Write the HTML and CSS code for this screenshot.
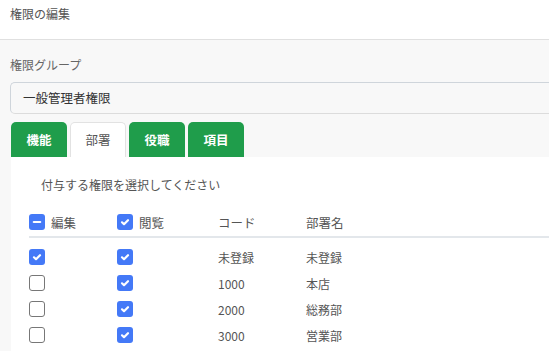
FILE: index.html
```html
<!DOCTYPE html>
<html>
<head>
    <title>権限の編集</title>
    <meta charset="utf-8">
    <link rel="stylesheet" href="styles.css">
</head>
<body>
    <div class="page">
        <div class="page-header">権限の編集</div>

        <div class="page-body">
            <label class="field-label">権限グループ</label>
            <div class="select-box">一般管理者権限</div>

            <div class="tabs">
                <div class="tab">機能</div>
                <div class="tab active">部署</div>
                <div class="tab">役職</div>
                <div class="tab">項目</div>
            </div>

            <div class="tab-panel">
                <p class="hint">付与する権限を選択してください</p>

                <div class="perm-table">
                    <div class="perm-row head">
                        <div class="cell"><span class="cb on"><svg viewBox="0 0 16 16"><path d="M4.8 8h6.4" /></svg></span>編集</div>
                        <div class="cell"><span class="cb on"><svg viewBox="0 0 16 16"><path d="M5 8.3l2 1.9 4-4" /></svg></span>閲覧</div>
                        <div class="cell">コード</div>
                        <div class="cell">部署名</div>
                    </div>
                    <div class="perm-body">
                        <div class="perm-row">
                            <div class="cell"><span class="cb on"><svg viewBox="0 0 16 16"><path d="M5 8.3l2 1.9 4-4" /></svg></span></div>
                            <div class="cell"><span class="cb on"><svg viewBox="0 0 16 16"><path d="M5 8.3l2 1.9 4-4" /></svg></span></div>
                            <div class="cell">未登録</div>
                            <div class="cell">未登録</div>
                        </div>
                        <div class="perm-row">
                            <div class="cell"><span class="cb"></span></div>
                            <div class="cell"><span class="cb on"><svg viewBox="0 0 16 16"><path d="M5 8.3l2 1.9 4-4" /></svg></span></div>
                            <div class="cell">1000</div>
                            <div class="cell">本店</div>
                        </div>
                        <div class="perm-row">
                            <div class="cell"><span class="cb"></span></div>
                            <div class="cell"><span class="cb on"><svg viewBox="0 0 16 16"><path d="M5 8.3l2 1.9 4-4" /></svg></span></div>
                            <div class="cell">2000</div>
                            <div class="cell">総務部</div>
                        </div>
                        <div class="perm-row">
                            <div class="cell"><span class="cb"></span></div>
                            <div class="cell"><span class="cb on"><svg viewBox="0 0 16 16"><path d="M5 8.3l2 1.9 4-4" /></svg></span></div>
                            <div class="cell">3000</div>
                            <div class="cell">営業部</div>
                        </div>
                    </div>
                </div>
            </div>
        </div>
    </div>
</body>
</html>
```

FILE: styles.css
```css
html, body {
    margin: 0;
    padding: 0;
    overflow: hidden;
}
body {
    font-family: "Noto Sans CJK JP", "Noto Sans", sans-serif;
    font-size: 12px;
    color: #555;
    background-color: #f8f8f8;
}
.page-header {
    height: 39px;
    line-height: 28px;
    padding-left: 10px;
    background-color: white;
    border-bottom: 1px solid #e0e0e0;
    color: #555;
}
.page-body {
    padding: 16px 0 0 10px;
}
.field-label {
    display: block;
    line-height: 18px;
    margin-bottom: 8px;
    color: #666;
}
.select-box {
    height: 30px;
    line-height: 30px;
    padding-left: 12px;
    border: 1px solid #cfd5db;
    border-right: none;
    border-bottom-color: #dcdcdc;
    border-radius: 5px 0 0 5px;
    font-size: 12.5px;
    color: #333;
}
.tabs {
    display: flex;
    gap: 3px;
    margin: 8px 0 0 1px;
}
.tab {
    width: 56px;
    height: 35px;
    box-sizing: border-box;
    line-height: 35px;
    text-align: center;
    background-color: #1f9d4b;
    color: white;
    font-weight: bold;
    font-size: 12.5px;
    border-radius: 5px 5px 0 0;
}
.tab.active {
    background-color: white;
    color: #555;
    font-weight: normal;
    border: 1px solid #e2e2e2;
    border-bottom: none;
    line-height: 33px;
}
.tab-panel {
    margin-left: 1px;
    background-color: white;
    padding: 19px 0 4px 18px;
}
.hint {
    margin: 0 0 14px 12px;
    line-height: 18px;
    font-size: 12px;
    color: #555;
}
.perm-row {
    display: grid;
    grid-template-columns: 88px 101px 88px 1fr;
    align-items: center;
    height: 26px;
}
.perm-row.head {
    height: 28px;
    border-bottom: 2px solid #e3e7eb;
    font-size: 12.5px;
    color: #666;
}
.perm-body {
    padding-top: 6px;
}
.cell {
    display: flex;
    align-items: center;
    gap: 6px;
    color: #555;
}
.cb {
    width: 16px;
    height: 16px;
    box-sizing: border-box;
    border: 1.5px solid #777;
    border-radius: 3px;
    background-color: white;
}
.cb.on {
    border: none;
    background-color: #4479f7;
}
.cb svg {
    display: block;
    width: 16px;
    height: 16px;
    fill: none;
    stroke: white;
    stroke-width: 2.2;
    stroke-linecap: round;
    stroke-linejoin: round;
}
```
